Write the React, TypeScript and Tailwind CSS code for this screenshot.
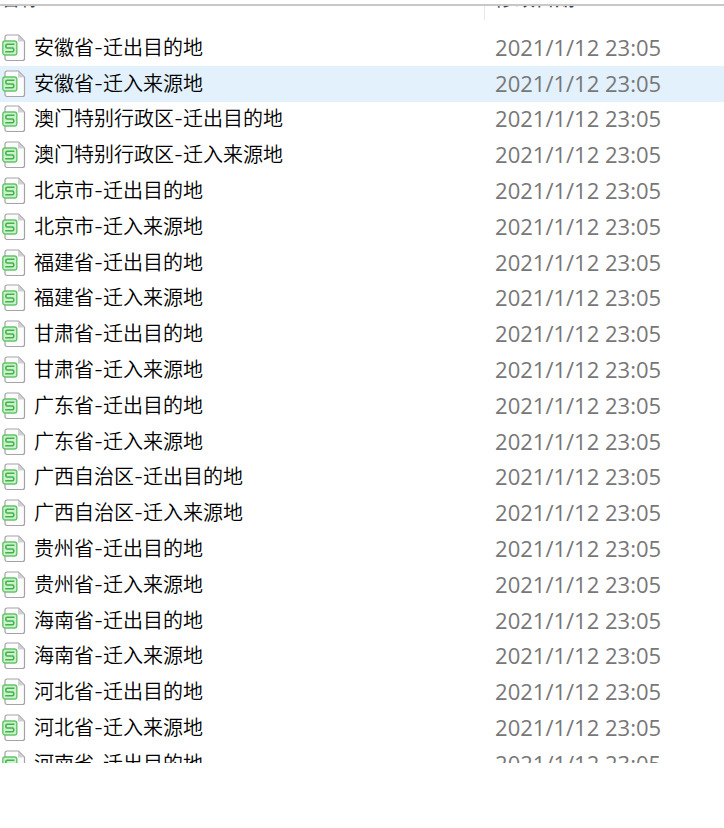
import { useState } from "react";

type FileItem = {
  name: string;
  date: string;
};

const provinces = [
  "安徽省",
  "澳门特别行政区",
  "北京市",
  "福建省",
  "甘肃省",
  "广东省",
  "广西自治区",
  "贵州省",
  "海南省",
  "河北省",
  "河南省",
];

const files: FileItem[] = provinces
  .flatMap((province) => [
    { name: `${province}-迁出目的地`, date: "2021/1/12 23:05" },
    { name: `${province}-迁入来源地`, date: "2021/1/12 23:05" },
  ])
  .slice(0, 21);

const SheetIcon: React.FC = () => (
  <svg width="24" height="28" viewBox="0 0 24 28" fill="none" aria-hidden="true">
    <path
      d="M5 1H16.5L22.5 7.2V24.5A2 2 0 0 1 20.5 26.5H5A2 2 0 0 1 3 24.5V3A2 2 0 0 1 5 1Z"
      fill="#fcfcfc"
      stroke="#a3a3a8"
      strokeWidth="1.2"
    />
    <path d="M16 1.3V7.4H22.3Z" fill="#d2d2d6" />
    <rect x="0.8" y="7" width="14" height="14" rx="2.2" fill="#c9f2cb" stroke="#65c46c" strokeWidth="1.4" />
    <path
      d="M12.4 10.3H5.2Q3.9 10.3 3.9 11.6V12.7Q3.9 14 5.2 14H10.4Q11.7 14 11.7 15.3V16.4Q11.7 17.7 10.4 17.7H3.2"
      stroke="#45b04e"
      strokeWidth="1.6"
    />
  </svg>
);

const App: React.FC = () => {
  const [selected, setSelected] = useState<number>(1);

  return (
    <main className="min-h-screen bg-white pt-1">
      <div className="max-h-[759px] overflow-hidden border-t-2 border-[#cbc7c7]">
        <table className="-mt-[18px] h-[794px] w-full table-fixed border-collapse text-left">
          <thead>
            <tr className="h-[42px] font-['Noto_Sans_CJK_SC',sans-serif] text-xl leading-5 text-gray-700">
              <th className="w-[67%] p-0 align-top font-normal">
                <div className="h-8 border-r border-gray-200">名称</div>
              </th>
              <th className="p-0 pl-2.5 align-top font-normal">修改日期</th>
            </tr>
          </thead>
          <tbody>
            {files.map((file, index) => (
              <tr
                key={file.name}
                onClick={() => setSelected(index)}
                className={index === selected ? "bg-[#e3f1fc]" : "bg-white"}
              >
                <td className="p-0">
                  <div className="flex items-center gap-2 pl-0.5 font-['Inter','Noto_Sans_CJK_SC',sans-serif] text-xl leading-7 font-[350] text-black">
                    <SheetIcon />
                    <span>{file.name}</span>
                  </div>
                </td>
                <td className="p-0 pb-0.5 pl-2.5 font-['Open_Sans',sans-serif] text-[22px] leading-7 text-[#777777]">
                  {file.date}
                </td>
              </tr>
            ))}
          </tbody>
        </table>
      </div>
    </main>
  );
};
export default App;
